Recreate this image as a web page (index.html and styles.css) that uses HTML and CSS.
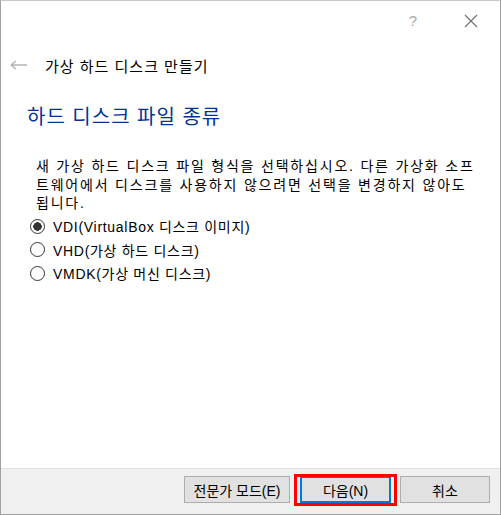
FILE: index.html
```html
<!DOCTYPE html>
<html lang="ko">
<head>
  <meta charset="UTF-8">
  <meta name="viewport" content="width=device-width, initial-scale=1.0">
  <title>가상 하드 디스크 만들기</title>
  <link rel="stylesheet" href="styles.css">
</head>
<body>
  <div class="wizard-window">
    <div class="title-bar">
      <span class="caption-btn help">?</span>
      <span class="caption-btn close">
        <svg width="14" height="14" viewBox="0 0 14 14">
          <path d="M1 1 L13 13 M13 1 L1 13" stroke="#6f6f6f" stroke-width="1.1" fill="none"/>
        </svg>
      </span>
    </div>

    <div class="wizard-header">
      <svg class="back-arrow" width="18" height="10" viewBox="0 0 18 10">
        <path d="M1 5 H17 M1 5 L6 1 M1 5 L6 9" stroke="#b4b4b4" stroke-width="1.6" fill="none"/>
      </svg>
      <span class="wizard-title">가상 하드 디스크 만들기</span>
    </div>

    <div class="wizard-page">
      <h2 class="page-heading">하드 디스크 파일 종류</h2>
      <p class="page-text">새 가상 하드 디스크 파일 형식을 선택하십시오. 다른 가상화 소프트웨어에서 디스크를 사용하지 않으려면 선택을 변경하지 않아도 됩니다.</p>

      <div class="format-list">
        <label class="format-option">
          <input type="radio" name="format" class="radio" checked>
          <span>VDI(VirtualBox 디스크 이미지)</span>
        </label>
        <label class="format-option">
          <input type="radio" name="format" class="radio">
          <span>VHD(가상 하드 디스크)</span>
        </label>
        <label class="format-option">
          <input type="radio" name="format" class="radio">
          <span>VMDK(가상 머신 디스크)</span>
        </label>
      </div>
    </div>

    <div class="button-bar">
      <button class="btn btn-expert">전문가 모드(E)</button>
      <button class="btn btn-default highlighted">다음(N)</button>
      <button class="btn btn-cancel">취소</button>
    </div>
  </div>
</body>
</html>
```

FILE: styles.css
```css
body {
  margin: 0;
  background: #ffffff;
  font-family: "Liberation Sans", "Noto Sans CJK KR", sans-serif;
  color: #000;
}
.wizard-window {
  width: 501px;
  height: 515px;
  box-sizing: border-box;
  border: 1px solid #a0a0a0;
  border-top-color: #c8c8c8;
  background: #fff;
  display: flex;
  flex-direction: column;
}
.title-bar {
  height: 39px;
  display: flex;
  justify-content: flex-end;
}
.caption-btn {
  width: 58px;
  display: flex;
  justify-content: center;
  align-items: center;
}
.caption-btn.help {
  font-size: 15px;
  color: #a8a8a8;
}
.wizard-header {
  height: 50px;
  display: flex;
  align-items: center;
  gap: 17px;
  padding-left: 9px;
}
.wizard-title {
  font-size: 15px;
  letter-spacing: 1px;
  color: #000;
}
.wizard-page {
  flex: 1;
  padding: 0 0 0 26px;
}
.page-heading {
  margin: 13px 0 0;
  font-size: 20px;
  font-weight: normal;
  line-height: 28px;
  letter-spacing: 1px;
  color: #003399;
}
.page-text {
  margin: 26px 0 0 9px;
  width: 446px;
  font-size: 14px;
  line-height: 18.5px;
  letter-spacing: 1.8px;
}
.format-list {
  margin-top: 2px;
  padding-left: 3px;
  display: flex;
  flex-direction: column;
}
.format-option {
  height: 23.5px;
  display: flex;
  align-items: center;
  gap: 8px;
  font-size: 14px;
  letter-spacing: 0.7px;
}
.radio {
  appearance: none;
  width: 15px;
  height: 15px;
  margin: 0;
  border: 1px solid #333;
  border-radius: 50%;
  background: #fff;
}
.radio:checked {
  background: radial-gradient(circle, #333 0 4px, #fff 4.5px);
}
.button-bar {
  height: 46px;
  box-sizing: border-box;
  border-top: 1px solid #dfdfdf;
  background: #f0f0f0;
  display: flex;
  justify-content: flex-end;
  gap: 10px;
  padding: 7px 10px 0 0;
}
.btn {
  height: 27px;
  box-sizing: border-box;
  border: 1px solid #adadad;
  background: #e1e1e1;
  font-family: "Liberation Sans", "Noto Sans CJK KR", sans-serif;
  font-size: 14px;
  color: #000;
  padding: 0;
}
.btn-expert {
  width: 106px;
}
.btn-default {
  width: 91px;
  border: 2px solid #0078d7;
}
.btn-cancel {
  width: 90px;
  margin-left: -1px;
}
.highlighted {
  position: relative;
}
.highlighted::after {
  content: "";
  position: absolute;
  inset: -4px -8px -5px;
  border: 3px solid #ff0000;
}
```
